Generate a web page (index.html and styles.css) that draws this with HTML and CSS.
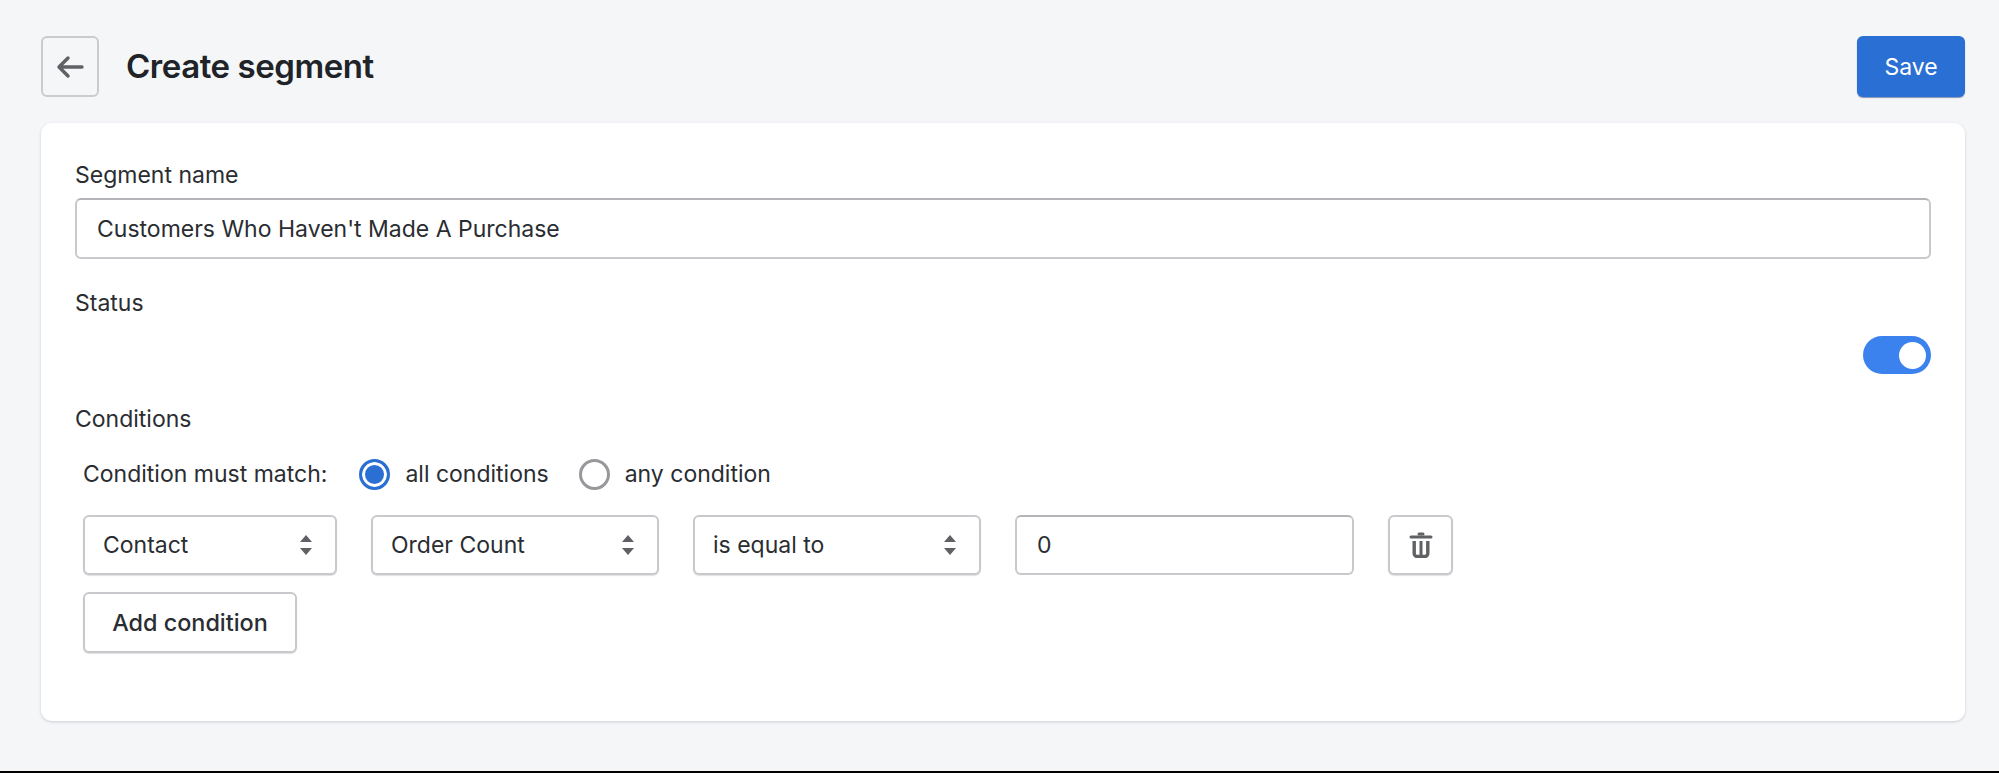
FILE: index.html
```html
<!DOCTYPE html>
<html lang="en">
<head>
<meta charset="utf-8">
<title>Create segment</title>
<link rel="stylesheet" href="styles.css">
</head>
<body>
<main class="page">
  <header class="topbar">
    <button class="back" aria-label="Back">
      <svg width="28" height="24" viewBox="0 0 28 24" fill="none" stroke="#5f6165" stroke-width="3.4" stroke-linecap="round" stroke-linejoin="round"><path d="M26 12H3M12 3l-9 9 9 9"/></svg>
    </button>
    <h1 class="title">Create segment</h1>
    <button class="save">Save</button>
  </header>
  <section class="card">
    <div class="label name-label">Segment name</div>
    <div class="field name-field">Customers Who Haven't Made A Purchase</div>
    <div class="label status-label">Status</div>
    <div class="toggle-row"><span class="toggle"><span class="knob"></span></span></div>
    <div class="label conditions-label">Conditions</div>
    <div class="match-row">
      <span class="match-text">Condition must match:</span>
      <span class="radio radio-on"></span>
      <span class="radio-text">all conditions</span>
      <span class="radio"></span>
      <span class="radio-text">any condition</span>
    </div>
    <div class="cond-row">
      <div class="field select sel-contact">Contact
        <svg class="updown" width="14" height="22" viewBox="0 0 14 22" fill="#5f6165"><path d="M7 1l6 7H1zM7 21L1 14h12z"/></svg>
      </div>
      <div class="field select sel-wide">Order Count
        <svg class="updown" width="14" height="22" viewBox="0 0 14 22" fill="#5f6165"><path d="M7 1l6 7H1zM7 21L1 14h12z"/></svg>
      </div>
      <div class="field select sel-wide">is equal to
        <svg class="updown" width="14" height="22" viewBox="0 0 14 22" fill="#5f6165"><path d="M7 1l6 7H1zM7 21L1 14h12z"/></svg>
      </div>
      <div class="field value">0</div>
      <button class="trash" aria-label="Delete condition">
        <svg width="24" height="26" viewBox="0 0 24 26" fill="none" stroke="#5f6165" stroke-linecap="round"><path d="M2 5h20" stroke-width="3"/><path d="M10 2h4" stroke-width="3"/><path d="M5.200 9v12.500a3 3 0 0 0 3 3h7.600a3 3 0 0 0 3-3V9" stroke-width="3.400" stroke-linecap="butt"/><path d="M12 9v15" stroke-width="3" stroke-linecap="butt"/></svg>
      </button>
    </div>
    <button class="add">Add condition</button>
  </section>
</main>
<div class="edge"></div>
</body>
</html>
```
FILE: styles.css
```css
* { box-sizing: border-box; }
html, body { margin: 0; height: 100%; }
body {
  display: flex;
  flex-direction: column;
  background: #f5f6f8;
  color: #2a2d31;
  font-family: Inter, "Liberation Sans", sans-serif;
  font-size: 23px;
  overflow: hidden;
}
button { font: inherit; color: inherit; cursor: pointer; }
.page { flex: 1; padding: 36px 34px 0 41px; }
.edge { height: 2px; background: #000; }

.topbar { display: flex; align-items: center; height: 61px; margin-bottom: 26px; }
.back {
  width: 58px; height: 61px; padding: 0;
  display: flex; align-items: center; justify-content: center;
  background: transparent;
  border: 2px solid #c9cbcf; border-radius: 6px;
}
.title { margin: 0 0 2px 27px; font-size: 33px; font-weight: 600; letter-spacing: -0.45px; color: #202327; flex: 1; }
.save {
  width: 108px; height: 61px; padding: 0;
  background: #2a6fd3; color: #fff; border: 0; border-radius: 6px;
  box-shadow: 0 1px 1px rgba(20, 50, 110, .5);
}

.card {
  height: 598px;
  padding: 39px 34px 0;
  background: #fff;
  border-radius: 11px;
  box-shadow: 0 1px 3px rgba(60, 66, 87, .22);
}
.label { height: 26px; line-height: 26px; }
.field {
  display: flex; align-items: center;
  height: 60px; padding: 0 20px;
  background: #fff;
  border: 2px solid #c8c9cc; border-radius: 6px;
}
.name-label { margin-bottom: 10px; }
.name-field { height: 61px; border-top-color: #b4b5b8; }
.status-label { margin-top: 31px; }
.toggle-row { display: flex; justify-content: flex-end; margin-top: 20px; }
.toggle {
  display: flex; align-items: center; justify-content: flex-end;
  width: 68px; height: 38px; padding-right: 5px;
  background: #3b82ee; border-radius: 19px;
}
.knob { width: 27px; height: 27px; background: #fff; border-radius: 50%; }
.conditions-label { margin-top: 32px; }

.match-row { display: flex; align-items: center; height: 30px; margin: 27px 0 0 8px; }
.match-text { margin-right: 32px; }
.radio {
  width: 31px; height: 31px; margin-right: 15px;
  border: 3px solid #96989b; border-radius: 50%; background: #fff;
}
.radio-text { margin-right: 30px; }
.radio-on { border-color: #2a6fd3; background: #2a6fd3; box-shadow: inset 0 0 0 3px #fff; }

.cond-row { display: flex; gap: 34px; margin: 26px 0 0 8px; }
.select { padding: 0 18px; justify-content: space-between; box-shadow: 0 1px 1px rgba(0, 0, 0, .12); }
.sel-contact { width: 254px; }
.sel-wide { width: 288px; }
.value { width: 339px; border-top-color: #b4b5b8; }
.updown { margin-right: 4px; }
.trash {
  width: 65px; height: 60px; padding: 0;
  display: flex; align-items: center; justify-content: center;
  background: #fff;
  border: 2px solid #c8c9cc; border-radius: 6px;
  box-shadow: 0 1px 1px rgba(0, 0, 0, .12);
}
.add {
  display: block;
  width: 214px; height: 61px; margin: 17px 0 0 8px; padding: 0;
  font-size: 23.4px;
  font-weight: 500;
  background: #fff;
  border: 2px solid #c8c9cc; border-radius: 6px;
  box-shadow: 0 1px 1px rgba(0, 0, 0, .12);
}
```
